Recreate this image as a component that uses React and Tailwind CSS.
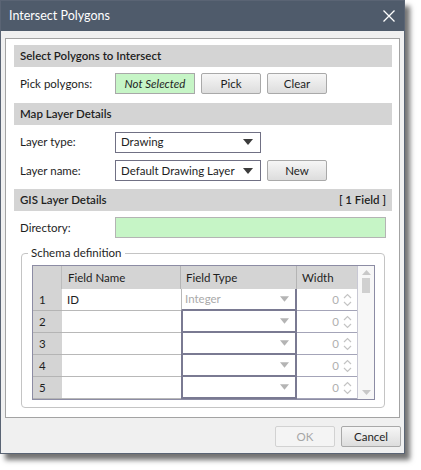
import React from "react";

const font = { fontFamily: 'Lato, "Noto Sans", sans-serif' };

function Btn({ children, disabled, className = "" }) {
  return (
    <div
      className={
        "flex h-[21px] w-[60px] items-center justify-center rounded-[2px] border text-[11.5px] " +
        (disabled
          ? "border-[#d2d2d2] bg-[#f4f4f4] text-[#a6a6a6] "
          : "border-[#a9a9a9] bg-gradient-to-b from-[#f6f6f6] to-[#dddddd] text-[#1e1e1e] ") +
        className
      }
    >
      {children}
    </div>
  );
}

function Header({ children, right }) {
  return (
    <div className="flex h-[22px] items-center justify-between whitespace-nowrap bg-[#d4d4d4] pl-[6px] pr-[6px] text-[11.5px] font-semibold text-[#1e1e1e]">
      <span>{children}</span>
      {right && <span>{right}</span>}
    </div>
  );
}

function Tri({ color = "#3c3c3c", w = 10 }) {
  return (
    <svg width={w} height="6" viewBox="0 0 10 6">
      <path d="M0 0 H10 L5 6 Z" fill={color} />
    </svg>
  );
}

function Combo({ text, className = "" }) {
  return (
    <div
      className={
        "flex h-[21px] w-[146px] items-center justify-between whitespace-nowrap border border-[#707084] bg-white pl-[5px] pr-[7px] text-[11.5px] text-[#1e1e1e] " +
        className
      }
    >
      <span>{text}</span>
      <Tri />
    </div>
  );
}

function Spinner() {
  return (
    <svg width="9" height="14" viewBox="0 0 9 14">
      <path d="M1 5 L4.5 1.5 L8 5" fill="none" stroke="#c4c4c4" strokeWidth="1.2" />
      <path d="M1 9 L4.5 12.5 L8 9" fill="none" stroke="#c4c4c4" strokeWidth="1.2" />
    </svg>
  );
}

function Row({ n, name, type, first }) {
  return (
    <div className="flex h-[22px]">
      <div className="flex w-[29px] items-center border-b border-[#b4b4b4] bg-[#d4d4d4] pl-[6px] text-[11.5px] text-[#1e1e1e]">
        {n}
      </div>
      <div className="flex w-[119px] items-center border-b border-[#b8b8b8] bg-white pl-[5px] text-[11.5px] text-[#1e1e1e]">
        {name}
      </div>
      <div
        className={
          "flex w-[116px] items-center justify-between bg-white pl-[3px] pr-[6px] text-[11.5px] text-[#aaaaaa] " +
          (first
            ? "border-b-2 border-l border-r-2 border-b-[#7a7a92] border-l-[#b8b8b8] border-r-[#7a7a92]"
            : "border-b-2 border-l-2 border-r-2 border-[#7a7a92]")
        }
      >
        <span>{type}</span>
        <Tri color="#b4b4b4" w={9} />
      </div>
      <div className="flex w-[60px] items-center justify-end gap-[4px] border-b border-[#a4a4b8] bg-white pr-[5px] text-[11.5px] text-[#b0b0b0]">
        <span>0</span>
        <Spinner />
      </div>
    </div>
  );
}

export default function App() {
  return (
    <div className="h-[470px] w-[421px] bg-white" style={font}>
      <div className="flex h-[454px] w-[405px] flex-col border border-[#5a6474] bg-[#f0f0f0] shadow-[5px_6px_5px_rgba(0,0,0,0.55)]">
        {/* title bar */}
        <div className="flex h-[30px] items-center justify-between bg-[#4f5b6b] pl-[8px] pr-[9px] text-white">
          <span className="text-[12.5px]">Intersect Polygons</span>
          <svg width="12" height="12" viewBox="0 0 12 12">
            <path d="M0.5 0.5 L11.5 11.5 M11.5 0.5 L0.5 11.5" stroke="#ffffff" strokeWidth="1.3" />
          </svg>
        </div>

        {/* body */}
        <div className="px-[4px] pt-[7px]">
          <div className="flex h-[380px] flex-col border border-[#a3a3a3] bg-white pb-[9px] pl-[8px] pr-[7px] pt-[6px]">
            <Header>Select Polygons to Intersect</Header>
            <div className="mt-[6px] flex h-[21px] items-center whitespace-nowrap pl-[6px] text-[11.5px] text-[#1e1e1e]">
              <span className="w-[95px]">Pick polygons:</span>
              <div className="flex h-[21px] w-[80px] items-center justify-center border border-[#a8a8a8] bg-[#c6f5c6] italic">
                Not Selected
              </div>
              <Btn className="ml-[6px]">Pick</Btn>
              <Btn className="ml-[6px]">Clear</Btn>
            </div>

            <div className="mt-[9px]">
              <Header>Map Layer Details</Header>
            </div>
            <div className="mt-[7px] flex h-[20px] items-center whitespace-nowrap pl-[6px] text-[11.5px] text-[#1e1e1e]">
              <span className="w-[95px]">Layer type:</span>
              <Combo text="Drawing" className="h-[20px]" />
            </div>
            <div className="mt-[8px] flex h-[21px] items-center whitespace-nowrap pl-[6px] text-[11.5px] text-[#1e1e1e]">
              <span className="w-[95px]">Layer name:</span>
              <Combo text="Default Drawing Layer" />
              <Btn className="ml-[6px]">New</Btn>
            </div>

            <div className="mt-[8px]">
              <Header right="[ 1 Field ]">GIS Layer Details</Header>
            </div>
            <div className="mt-[6px] flex h-[21px] items-center whitespace-nowrap pl-[6px] text-[11.5px] text-[#1e1e1e]">
              <span className="w-[95px]">Directory:</span>
              <div className="h-[21px] w-[271px] border border-[#b4b4b4] bg-[#c6f5c6]" />
            </div>

            <fieldset className="mx-[7px] mt-[7px] rounded-[4px] border border-[#c4c4c4] pb-[7px] pl-[10px] pr-[9px]">
              <legend className="ml-[-4px] h-[16px] px-[3px] text-[11.5px] leading-[16px] text-[#1e1e1e]">
                Schema definition
              </legend>
              <div className="mt-[4px] flex border border-[#8c8ca4]">
                <div className="flex flex-col">
                  <div className="flex h-[23px] bg-[#d4d4d4] text-[11.5px] text-[#1e1e1e]">
                    <div className="w-[29px] border-r border-[#bcbcbc]" />
                    <div className="flex w-[119px] items-center border-r border-[#b4b4b4] pl-[6px]">Field Name</div>
                    <div className="flex w-[116px] items-center border-r border-[#b4b4b4] pl-[5px]">Field Type</div>
                    <div className="flex w-[60px] items-center pl-[5px]">Width</div>
                  </div>
                  <Row n="1" name="ID" type="Integer" first />
                  <Row n="2" />
                  <Row n="3" />
                  <Row n="4" />
                  <Row n="5" />
                </div>
                <div className="flex w-[17px] flex-col items-center justify-between border-l border-[#c8c8d4] bg-[#f7f7f7] py-[4px]">
                  <div className="flex flex-col items-center">
                    <svg width="9" height="5" viewBox="0 0 9 5">
                      <path d="M0 5 L4.5 0 L9 5 Z" fill="#c8c8c8" />
                    </svg>
                    <div className="mt-[3px] h-[15px] w-[8px] bg-[#d0d0d0]" />
                  </div>
                  <svg width="9" height="5" viewBox="0 0 9 5">
                    <path d="M0 0 H9 L4.5 5 Z" fill="#c8c8c8" />
                  </svg>
                </div>
              </div>
            </fieldset>
          </div>
        </div>

        {/* footer */}
        <div className="mt-[8px] flex justify-end gap-[6px] pr-[3px]">
          <Btn disabled>OK</Btn>
          <Btn>Cancel</Btn>
        </div>
      </div>
    </div>
  );
}
